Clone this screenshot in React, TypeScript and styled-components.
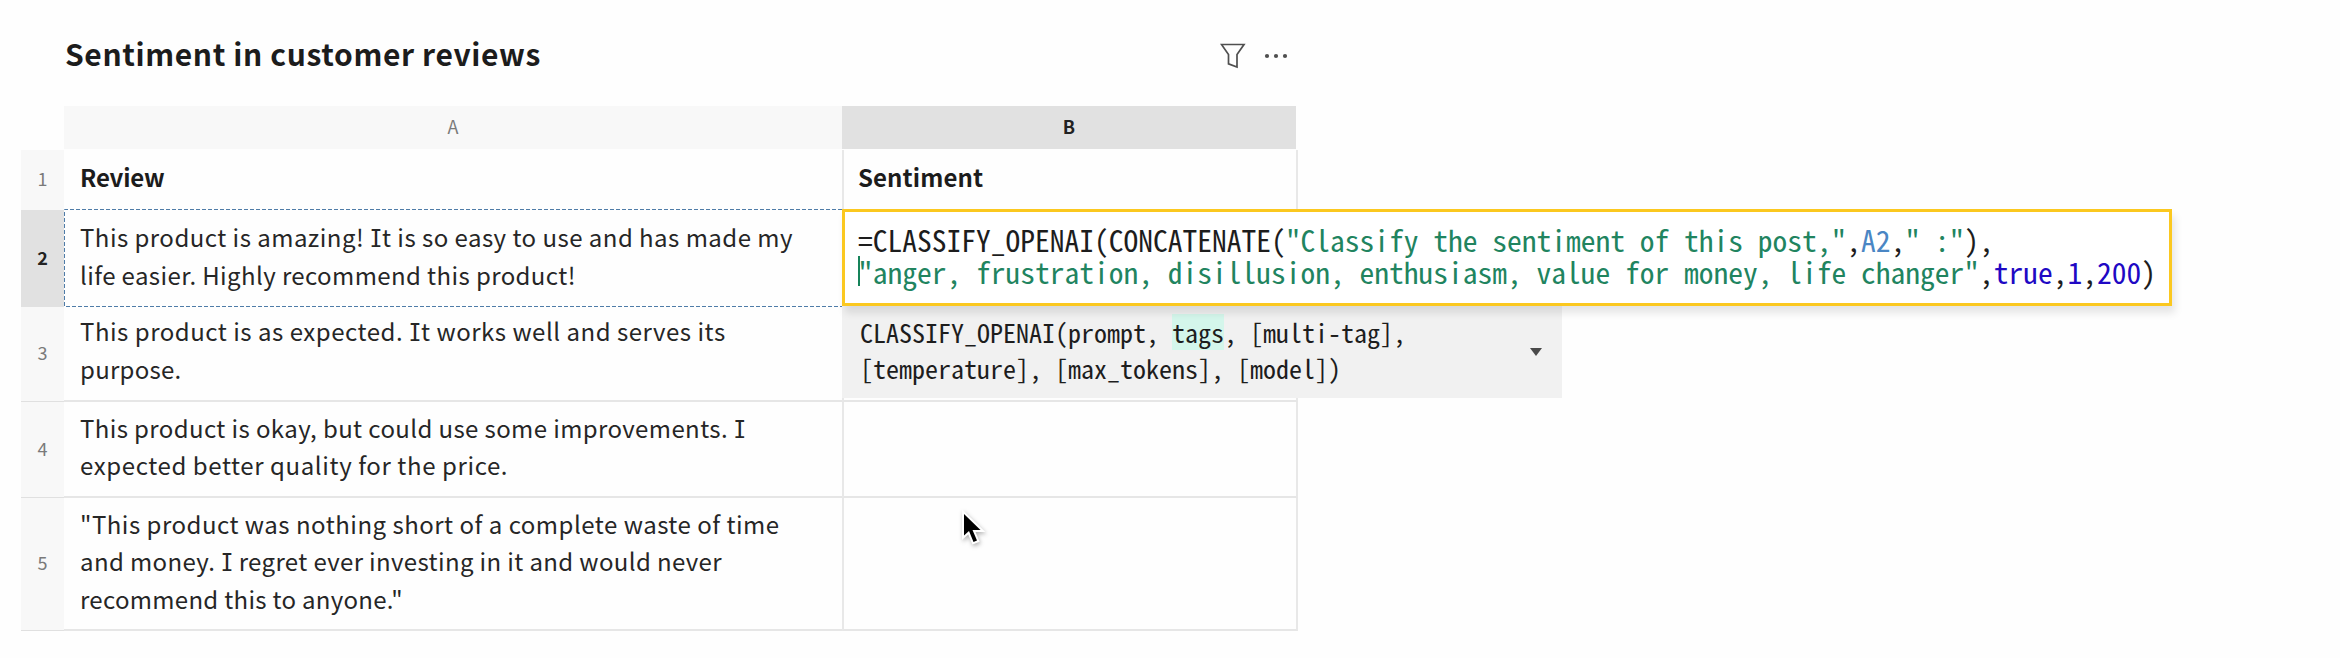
import React from "react";
import styled, { createGlobalStyle } from "styled-components";

const GlobalStyle = createGlobalStyle`
  * { box-sizing: border-box; }
  body { margin: 0; background: #fefefe; }
`;

const sans = `"Noto Sans CJK SC", Roboto, sans-serif`;
const mono = `"Noto Sans Mono CJK SC", "Liberation Mono", monospace`;

const Page = styled.main`
  width: 100%;
  height: 658px;
  overflow: hidden;
  padding-left: 21px;
  color: #222;
  font-family: ${sans};
`;

const Sheet = styled.section`
  position: relative;
  width: 1277px;
`;

const TitleBar = styled.header`
  display: flex;
  align-items: center;
  justify-content: space-between;
  height: 106px;
  padding: 0 10px 0 44px;
`;

const Title = styled.h1`
  margin: 0;
  font-size: 30px;
  line-height: 40px;
  font-weight: 700;
  letter-spacing: 0.62px;
  white-space: nowrap;
  color: #1c1c1c;
`;

const Actions = styled.div`
  display: flex;
  align-items: center;
  gap: 18px;
  padding-top: 5px;
`;

const Row = styled.div<{ $height: number }>`
  display: grid;
  grid-template-columns: 43px 778px 456px;
  height: ${(p) => p.$height}px;
`;

const ColumnHead = styled.div<{ $active?: boolean }>`
  display: flex;
  align-items: center;
  justify-content: center;
  height: 43px;
  padding-bottom: 4px;
  margin-right: ${(p) => (p.$active ? 2 : 0)}px;
  background: ${(p) => (p.$active ? "#e1e1e1" : "#f8f8f8")};
  color: ${(p) => (p.$active ? "#222" : "#7a7a7a")};
  font-size: 18px;
  font-weight: ${(p) => (p.$active ? 700 : 400)};
`;

const RowHead = styled.div<{ $active?: boolean; $line?: boolean }>`
  display: flex;
  align-items: center;
  justify-content: center;
  padding-bottom: 4px;
  background: ${(p) => (p.$active ? "#e1e1e1" : "#f8f8f8")};
  border-bottom: ${(p) => (p.$line ? "1px solid #e0e0e0" : "none")};
  color: ${(p) => (p.$active ? "#222" : "#7a7a7a")};
  font-size: 18px;
  font-weight: ${(p) => (p.$active ? 700 : 400)};
`;

const Cell = styled.div<{ $line?: boolean; $bold?: boolean; $top?: number }>`
  padding: ${(p) => p.$top ?? 8}px 0 0 16px;
  border-bottom: ${(p) => (p.$line ? "2px solid #e6e6e6" : "none")};
  font-size: 24px;
  line-height: 37.6px;
  font-weight: ${(p) => (p.$bold ? 700 : 400)};
  color: ${(p) => (p.$bold ? "#1c1c1c" : "#262626")};
`;

const ResultCell = styled(Cell)`
  position: relative;
  padding-left: 14px;
  border-left: 2px solid #e8e8e8;
  border-right: 2px solid #e8e8e8;
`;

const ReferencedCell = styled(Cell)`
  position: relative;
`;

const Marquee = styled.svg`
  position: absolute;
  left: 0;
  top: -1px;
`;

const Line = styled.span<{ $tracking: number }>`
  display: block;
  width: max-content;
  white-space: nowrap;
  letter-spacing: ${(p) => p.$tracking}px;
`;

/* Capital I with slab serifs. */
const SlabI = styled.span`
  font-family: ${mono};
  letter-spacing: 0;
`;

const Editor = styled.div`
  position: absolute;
  z-index: 3;
  left: -2px;
  top: -1px;
  width: 1330px;
  height: 97px;
  padding: 11px 0 0 13px;
  border: 3px solid #fbc81f;
  background: #fff;
  box-shadow: 3px 7px 8px rgba(0, 0, 0, 0.1);
  font-family: ${mono};
  font-size: 29.5px;
  line-height: 32px;
  color: #1d1d1d;
`;

const CodeLine = styled.div`
  height: 32px;
  white-space: pre;
`;

const Str = styled.span`
  color: #21845f;
`;
const Ref = styled.span`
  color: #4a86c4;
`;
const Lit = styled.span`
  color: #2008c4;
`;

const Caret = styled.i`
  position: absolute;
  left: 13px;
  top: 44px;
  width: 2px;
  height: 30px;
  background: #16835a;
`;

const Hint = styled.div`
  position: absolute;
  z-index: 2;
  left: -2px;
  top: 96px;
  display: flex;
  align-items: center;
  justify-content: space-between;
  width: 720px;
  height: 92px;
  padding: 0 20px 0 18px;
  background: #f1f1f1;
  font-family: ${mono};
  font-size: 26px;
  line-height: 36px;
  color: #1d1d1d;
`;

const Signature = styled.div`
  margin-top: -4px;
  white-space: pre;
`;

const ActiveParam = styled.span`
  background: linear-gradient(#d4f6eb, #d4f6eb) 0 1px / 100% 36px no-repeat;
`;

const Pointer = styled.svg`
  position: absolute;
  left: 939px;
  top: 508px;
  overflow: visible;
  filter: drop-shadow(1px 2px 2px rgba(0, 0, 0, 0.3));
`;

function Text({ tracking, children }: { tracking: number; children: string }) {
  return (
    <Line $tracking={tracking}>
      {children.split(/(\bI)/).map((part, i) => (part === "I" ? <SlabI key={i}>I</SlabI> : part))}
    </Line>
  );
}

export default function App() {
  return (
    <>
      <GlobalStyle />
      <Page>
        <Sheet>
          <TitleBar>
            <Title>Sentiment in customer reviews</Title>
            <Actions>
              <svg width="26" height="26" viewBox="0 0 26 26" fill="none" stroke="#4f4f4f" strokeWidth="1.7">
                <path d="M1.5 1.5H24L17 11.5V24L8.5 20.8V11.5Z" />
              </svg>
              <svg width="24" height="6" viewBox="0 0 24 6" fill="#4f4f4f">
                <circle cx="3" cy="3" r="2.1" />
                <circle cx="12" cy="3" r="2.1" />
                <circle cx="21" cy="3" r="2.1" />
              </svg>
            </Actions>
          </TitleBar>
          <Row $height={44}>
            <span />
            <ColumnHead>A</ColumnHead>
            <ColumnHead $active>B</ColumnHead>
          </Row>
          <Row $height={60}>
            <RowHead>1</RowHead>
            <Cell $bold>
              <Text tracking={-0.2}>Review</Text>
            </Cell>
            <ResultCell $bold>
              <Text tracking={0.1}>Sentiment</Text>
            </ResultCell>
          </Row>
          <Row $height={97}>
            <RowHead $active>2</RowHead>
            <ReferencedCell>
              <Text tracking={0.47}>This product is amazing! It is so easy to use and has made my</Text>
              <Text tracking={0.4}>life easier. Highly recommend this product!</Text>
              <Marquee width="778" height="98" fill="none" stroke="#4f7ca8" strokeDasharray="4 2">
                <path d="M778 0.5H0.5V97.5H778" />
              </Marquee>
            </ReferencedCell>
            <ResultCell>
              <Editor>
                <CodeLine>
                  =CLASSIFY_OPENAI(CONCATENATE(<Str>"Classify the sentiment of this post,"</Str>,<Ref>A2</Ref>,
                  <Str>" :"</Str>),
                </CodeLine>
                <CodeLine>
                  <Str>"anger, frustration, disillusion, enthusiasm, value for money, life changer"</Str>,
                  <Lit>true</Lit>,<Lit>1</Lit>,<Lit>200</Lit>)
                </CodeLine>
                <Caret />
              </Editor>
              <Hint>
                <Signature>
                  {"CLASSIFY_OPENAI(prompt, "}
                  <ActiveParam>tags</ActiveParam>
                  {", [multi-tag],\n[temperature], [max_tokens], [model])"}
                </Signature>
                <svg width="12" height="8" viewBox="0 0 12 8" fill="#4a4a4a">
                  <path d="M0 0H12L6 8Z" />
                </svg>
              </Hint>
            </ResultCell>
          </Row>
          <Row $height={95}>
            <RowHead $line>3</RowHead>
            <Cell $line $top={5}>
              <Text tracking={0.52}>This product is as expected. It works well and serves its</Text>
              <Text tracking={0.25}>purpose.</Text>
            </Cell>
            <ResultCell $line />
          </Row>
          <Row $height={96}>
            <RowHead $line>4</RowHead>
            <Cell $line $top={6.5}>
              <Text tracking={0.39}>This product is okay, but could use some improvements. I</Text>
              <Text tracking={0.6}>expected better quality for the price.</Text>
            </Cell>
            <ResultCell $line />
          </Row>
          <Row $height={133}>
            <RowHead $line>5</RowHead>
            <Cell $line $top={6.5}>
              <Text tracking={0.5}>"This product was nothing short of a complete waste of time</Text>
              <Text tracking={0.37}>and money. I regret ever investing in it and would never</Text>
              <Text tracking={0.3}>recommend this to anyone."</Text>
            </Cell>
            <ResultCell $line />
          </Row>
          <Pointer width="26" height="38" viewBox="0 0 26 38">
            <path
              d="M4 6V27.5L9 23L13.5 34L17 32.6L12.5 22H20.5Z"
              fill="#000"
              stroke="#fff"
              strokeWidth="4"
              paintOrder="stroke"
            />
          </Pointer>
        </Sheet>
      </Page>
    </>
  );
}
